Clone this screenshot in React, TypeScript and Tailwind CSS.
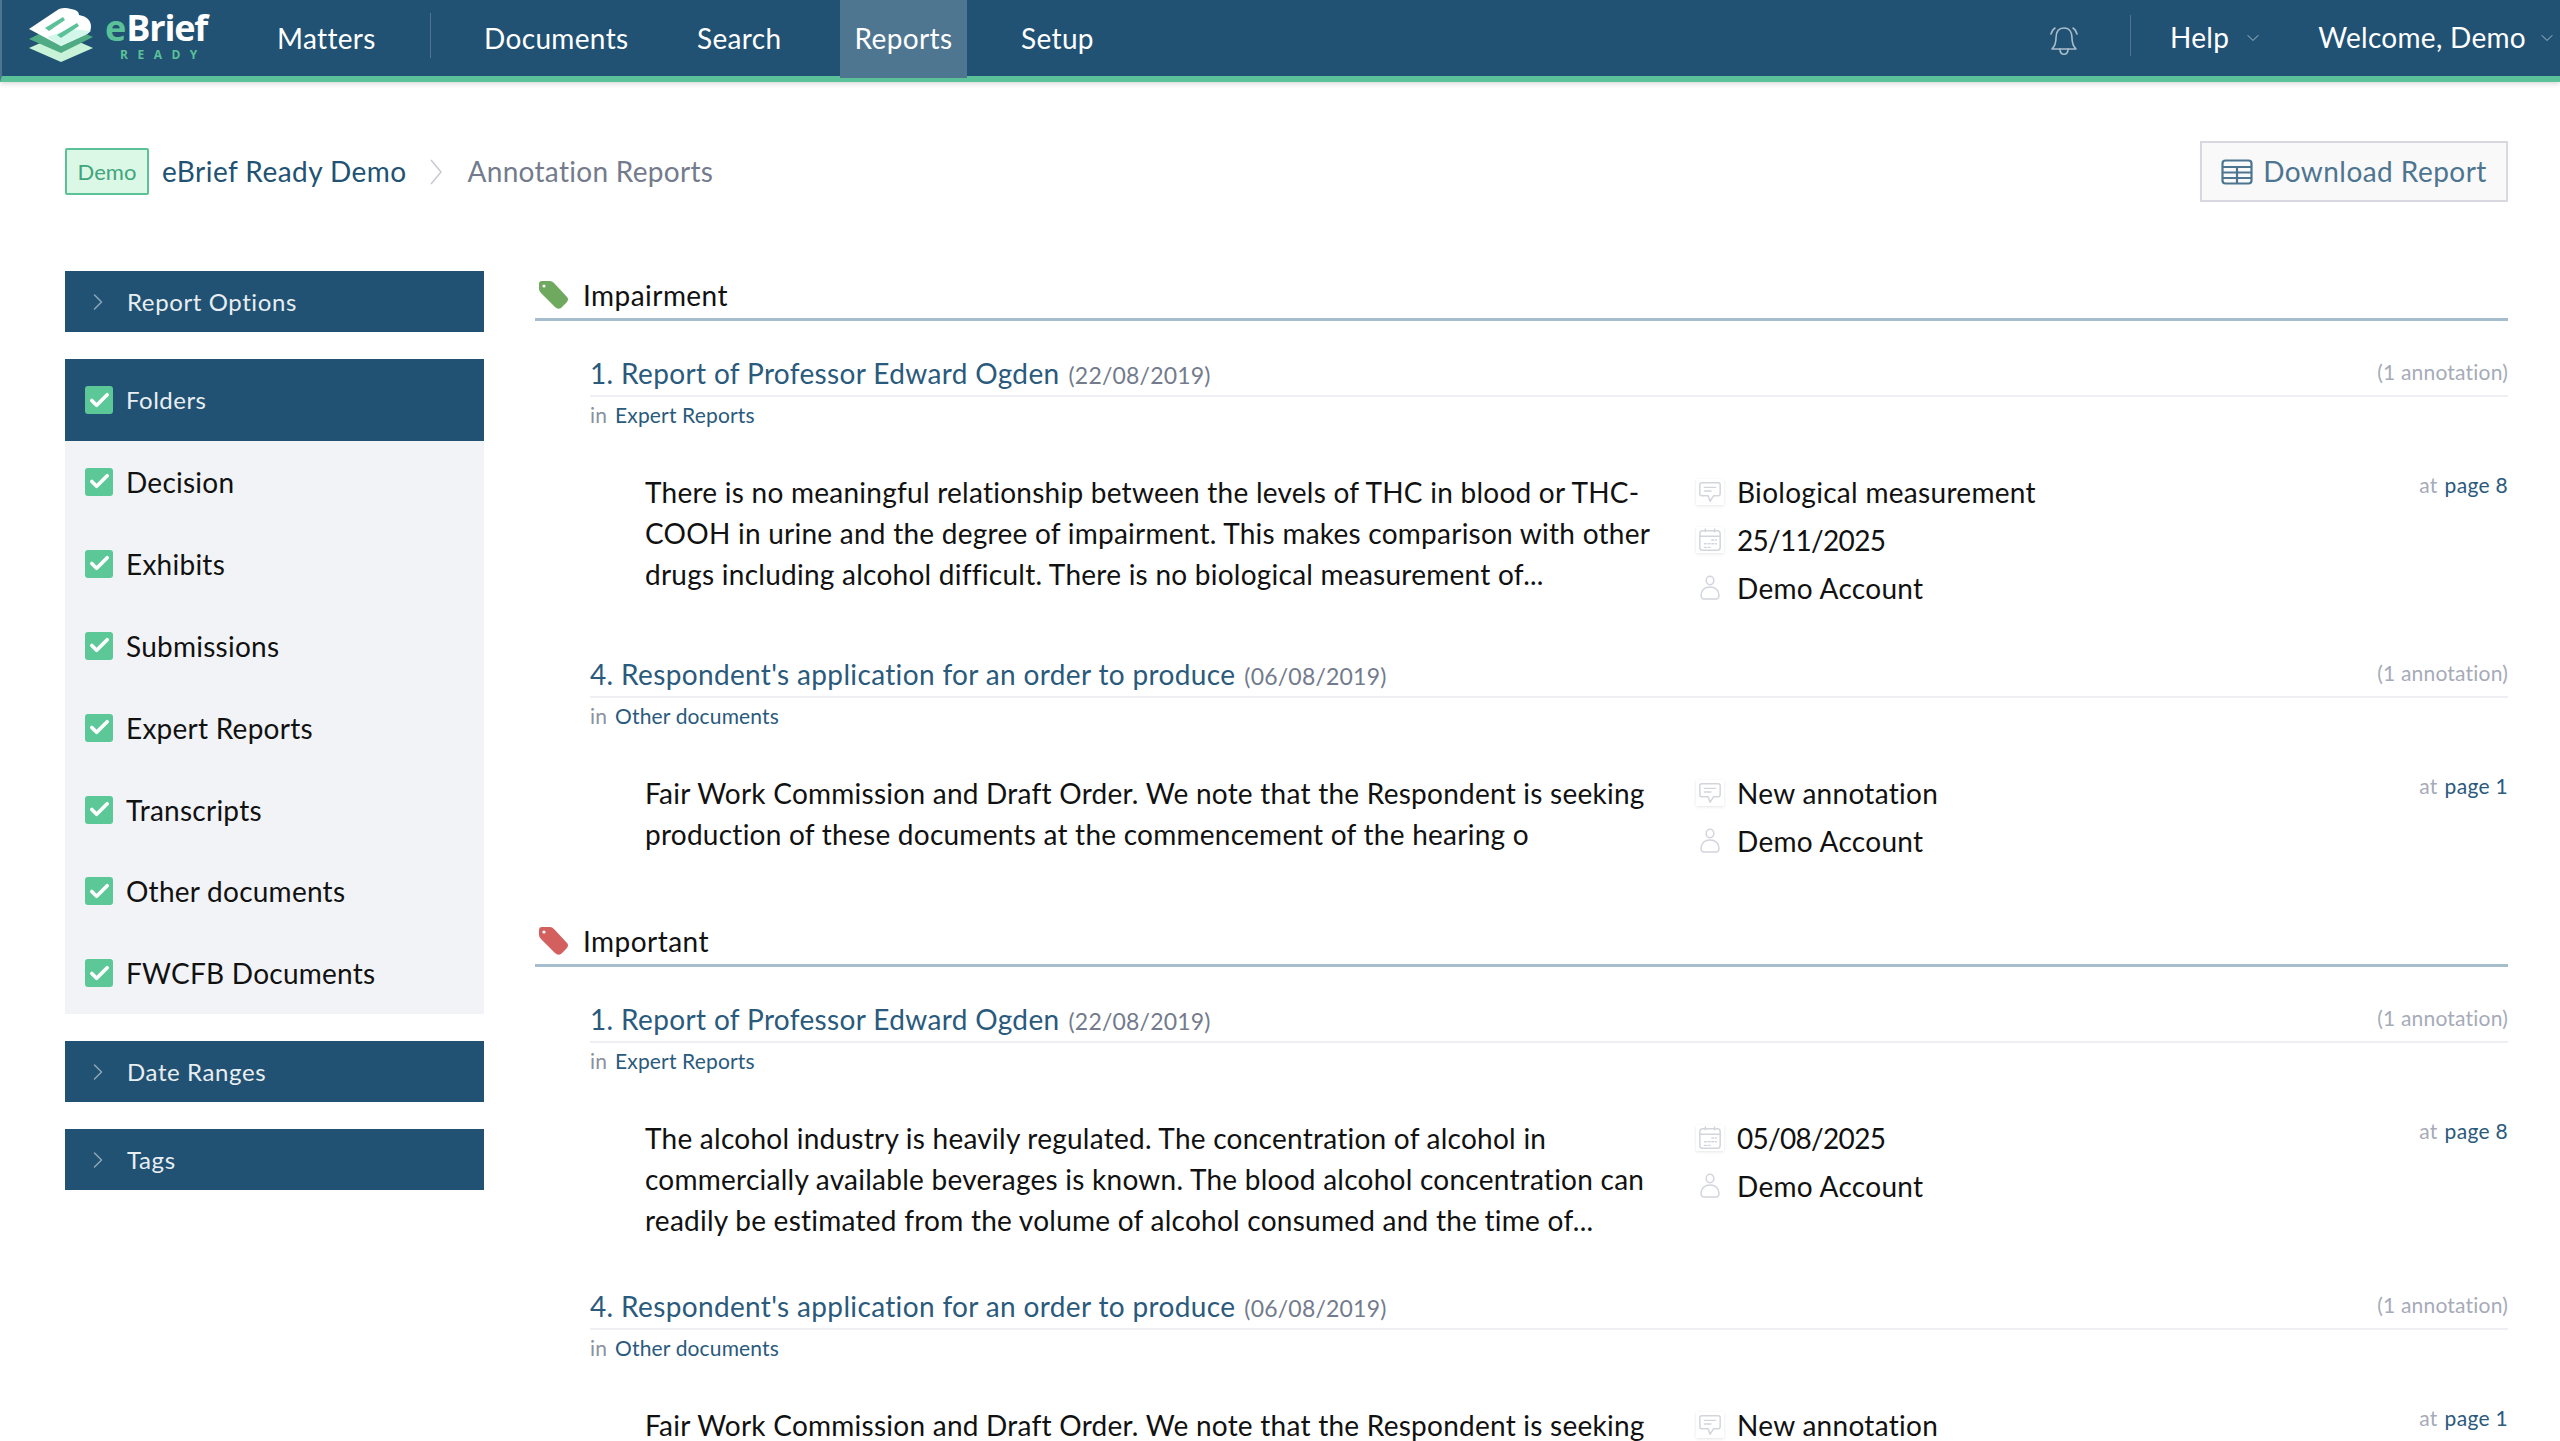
import React from "react";
import { ChevronRight, ChevronDown, Check } from "lucide-react";

function Logo() {
  return (
    <div className="flex items-center pl-[25px] w-[261px] h-[76px] shrink-0">
      <svg width="68" height="56" viewBox="0 0 68 56" className="shrink-0 mt-[-6px]">
        <path d="M34 28 L66 42 L34 56 L2 42 Z" fill="#c8f3d8" transform="translate(0,-1)" />
        <path d="M34 16 L66 30 L34 46 L2 32 Z" fill="#4fab83" />
        <path d="M2 22 L32 2 Q38 0 44 2 Q52 3 52 8 Q64 10 64 20 Q64 26 58 28 L34 39 Z" fill="#ffffff" />
        <path d="M34 39 L58 28 L64 24 L44 22 L20 30 Z" fill="#d3f7ea" />
        <path d="M18 21 L36 10 L38 13 L22 24 Z" fill="#5bc199" />
        <path d="M30 28 L50 16 L52 19 L34 31 Z" fill="#5bc199" />
      </svg>
      <div className="ml-[10px] flex flex-col items-start mt-[-6px]">
        <div className="text-[36px] leading-[36px] font-bold font-['Open_Sans',sans-serif]">
          <span className="text-[#5bc199]">e</span>
          <span className="text-white tracking-[-1.2px]">Brief</span>
        </div>
        <div className="text-[12px] leading-[12px] font-bold text-[#5bc199] tracking-[9.5px] ml-[15px] mt-[3px] font-['Open_Sans',sans-serif]">READY</div>
      </div>
    </div>
  );
}

function NavItem({ children, active = false, cls = "" }: { children: React.ReactNode; active?: boolean; cls?: string }) {
  return (
    <div className={`h-[78px] pb-[3px] flex items-center text-[28px] text-white tracking-[0.35px] px-[14px] relative z-10 whitespace-nowrap ${active ? "bg-[#4f7691] justify-center" : ""} ${cls}`}>
      {children}
    </div>
  );
}

function TopBar() {
  return (
    <div className="h-[82px] bg-[#215273] border-b-[6px] border-[#5bc199] border-l-2 border-l-[#4f7691] flex items-start shadow-[0_2px_5px_rgba(0,0,0,0.15)] shrink-0">
      <Logo />
      <NavItem cls="w-[125px]">Matters</NavItem>
      <div className="w-px h-[45px] bg-[#4f7691] mt-[13px] ml-[42px] mr-[39px]" />
      <NavItem cls="w-[172px]">Documents</NavItem>
      <NavItem cls="ml-[41px] w-[116px]">Search</NavItem>
      <NavItem cls="ml-[41px] w-[127px]" active>Reports</NavItem>
      <NavItem cls="ml-[40px]">Setup</NavItem>
      <div className="flex-1" />
      <svg width="34" height="32" viewBox="0 0 34 32" fill="none" stroke="#a9bdcb" strokeWidth="1.6" strokeLinecap="round" strokeLinejoin="round" className="mt-[25px] mr-[49px]">
        <path d="M17 3 C11 3 9 8 9 13 C9 19 7 22 5 24 L29 24 C27 22 25 19 25 13 C25 8 23 3 17 3 Z" />
        <path d="M13 24 C13 31 21 31 21 24" />
        <path d="M4 9 C5 6 6 4 8 3 M30 9 C29 6 28 4 26 3" />
      </svg>
      <div className="w-px h-[41px] bg-[#4f7691] mt-[15px] mr-[39px]" />
      <div className="h-[76px] pb-[3px] flex items-center text-[28px] text-white tracking-[0.3px]">Help</div>
      <ChevronDown size={20} strokeWidth={1.2} color="#a9bdcb" className="mt-[28px] ml-[14px] mr-[55px]" />
      <div className="h-[76px] pb-[3px] flex items-center text-[28px] text-white tracking-[0.3px] whitespace-nowrap">Welcome, Demo</div>
      <ChevronDown size={20} strokeWidth={1.2} color="#a9bdcb" className="mt-[28px] ml-[11px] mr-[3px] shrink-0" />
    </div>
  );
}

function Box() {
  return (
    <div className="w-[28px] h-[28px] rounded-[3px] bg-[#5cc898] flex items-center justify-center shrink-0">
      <Check size={23} color="#ffffff" strokeWidth={3.8} />
    </div>
  );
}

function Head({ label, cls = "" }: { label: string; cls?: string }) {
  return (
    <div className={`h-[61px] bg-[#215273] flex items-center text-[24px] text-[#e8eef2] tracking-[0.6px] ${cls}`}>
      <ChevronRight size={28} color="#8ba5b7" strokeWidth={1.3} className="ml-[19px] mr-[15px]" />
      {label}
    </div>
  );
}

function Sidebar() {
  const items = ["Decision", "Exhibits", "Submissions", "Expert Reports", "Transcripts", "Other documents", "FWCFB Documents"];
  return (
    <div className="w-[419px] shrink-0 pt-[189px]">
      <Head label="Report Options" />
      <div className="h-[82px] mt-[27px] bg-[#215273] flex items-center text-[24px] text-[#e8eef2] tracking-[0.5px] pl-[20px] gap-[13px]">
        <Box />
        Folders
      </div>
      <div className="bg-[#f2f3f6]">
        {items.map((t) => (
          <div key={t} className="h-[81.9px] flex items-center pl-[20px] gap-[13px] text-[28px] text-[#111111] tracking-[0.25px]">
            <Box />
            {t}
          </div>
        ))}
      </div>
      <Head label="Date Ranges" cls="mt-[27px]" />
      <Head label="Tags" cls="mt-[27px]" />
    </div>
  );
}

function TagIcon({ color }: { color: string }) {
  return (
    <svg width="32" height="30" viewBox="0 0 32 30" className="shrink-0">
      <path d="M2 4 Q2 1 5 1 L13 1 Q15 1 17 3 L30 17 Q32 19 30 22 L24 28 Q21 30 18 27 L4 13 Q2 11 2 9 Z" fill={color} />
      <circle cx="7" cy="6" r="1.6" fill="#ffffff" />
    </svg>
  );
}

function Section({ color, label, cls = "" }: { color: string; label: string; cls?: string }) {
  return (
    <div className={`h-[50px] border-b-[3px] border-[#a5bdcd] flex items-center pl-[2px] ${cls}`}>
      <TagIcon color={color} />
      <span className="ml-[14px] text-[28px] text-[#111111] tracking-[0.45px]">{label}</span>
    </div>
  );
}

function DocHead({ title, date, folder }: { title: string; date: string; folder: string }) {
  return (
    <div className="ml-[55px]">
      <div className="h-[43px] mt-[33px] border-b-2 border-[#eeeff2] flex items-start justify-between">
        <div className="whitespace-nowrap leading-[38px]">
          <span className="text-[28px] text-[#2a5a7c] tracking-[0.35px]">{title}</span>
          <span className="text-[23px] text-[#737b8c] ml-[9px] tracking-[0.2px]">{date}</span>
        </div>
        <span className="text-[21px] text-[#a6abb8] leading-[36px] tracking-[0.2px]">(1 annotation)</span>
      </div>
      <div className="h-[36px] flex items-center text-[21px] tracking-[0.15px]">
        <span className="text-[#8a91a1]">in</span>
        <span className="ml-[8px] text-[#2a5a7c]">{folder}</span>
      </div>
    </div>
  );
}

function IconBox({ children }: { children: React.ReactNode }) {
  return (
    <div className="w-[28px] h-[26px] flex items-center justify-center bg-white shadow-[0_1px_3px_rgba(0,0,0,0.1)]">
      {children}
    </div>
  );
}

function CommentIcon() {
  return (
    <IconBox>
      <svg width="24" height="24" viewBox="0 0 26 26" fill="none" stroke="#d3d5dd" strokeWidth="1.6" strokeLinejoin="round" strokeLinecap="round" className="shrink-0">
        <path d="M4 3 H22 Q24 3 24 5 V15 Q24 17 22 17 H17 L13 23 L11 17 H4 Q2 17 2 15 V5 Q2 3 4 3 Z" />
        <path d="M7 8 H19 M7 12 H14" />
      </svg>
    </IconBox>
  );
}
function CalIcon() {
  return (
    <IconBox>
      <svg width="24" height="24" viewBox="0 0 26 26" fill="none" stroke="#d3d5dd" strokeWidth="1.6" strokeLinecap="round" className="shrink-0">
        <rect x="2" y="3" width="22" height="21" rx="3" />
        <path d="M2 9 H24 M8 1 V4 M18 1 V4" />
        <path d="M15 13 H20 M7 17 H20 M7 21 H15" strokeDasharray="2 2" />
      </svg>
    </IconBox>
  );
}
function UserIcon() {
  return (
    <div className="w-[28px] flex justify-center">
      <svg width="26" height="26" viewBox="0 0 26 26" fill="none" stroke="#d3d5dd" strokeWidth="1.5" className="shrink-0">
        <ellipse cx="13" cy="5.5" rx="3.8" ry="4.2" />
        <path d="M7 24 Q4 24 4 20 Q5 12 13 12 Q21 12 22 20 Q22 24 19 24 Z" />
      </svg>
    </div>
  );
}

function Meta({ icon, text, date }: { icon: React.ReactNode; text: string; date?: boolean }) {
  return (
    <div className={`h-[48px] flex items-center text-[28px] text-[#111111] whitespace-nowrap ${date ? "tracking-[-0.7px]" : "tracking-[0.3px]"}`}>
      <div className="w-[41px] flex items-center">{icon}</div>
      {text}
    </div>
  );
}

function Annotation({ lines, meta, page, pb }: { lines: string[]; meta: [React.ReactNode, string][]; page: string; pb: string }) {
  return (
    <div className={`ml-[110px] flex items-start pt-[39px] ${pb}`}>
      <div className="w-[1052px] shrink-0 text-[28px] leading-[41px] text-[#111111] tracking-[0.25px]">
        {lines.map((l) => (
          <div key={l} className="whitespace-nowrap">{l}</div>
        ))}
      </div>
      <div className="mt-[-4px] ml-[-1px] flex-1">
        {meta.map(([icon, text]) => (
          <Meta key={text} icon={icon} text={text} date={/^\d/.test(text)} />
        ))}
      </div>
      <div className="text-[21px] leading-[26px] tracking-[0.3px] whitespace-nowrap">
        <span className="text-[#a6abb8]">at</span>
        <span className="ml-[7px] text-[#2a5a7c]">page {page}</span>
      </div>
    </div>
  );
}

const t1 = "1. Report of Professor Edward Ogden";
const t4 = "4. Respondent's application for an order to produce";
const d1 = "(22/08/2019)";
const d4 = "(06/08/2019)";
const fw = [
  "Fair Work Commission and Draft Order. We note that the Respondent is seeking",
  "production of these documents at the commencement of the hearing o",
];

function Main() {
  return (
    <div className="flex-1 min-w-0 pt-[189px] ml-[51px]">
      <Section color="#6ea95f" label="Impairment" />
      <DocHead title={t1} date={d1} folder="Expert Reports" />
      <Annotation
        pb="pb-[10px]"
        page="8"
        lines={[
          "There is no meaningful relationship between the levels of THC in blood or THC-",
          "COOH in urine and the degree of impairment. This makes comparison with other",
          "drugs including alcohol difficult. There is no biological measurement of...",
        ]}
        meta={[
          [<CommentIcon />, "Biological measurement"],
          [<CalIcon />, "25/11/2025"],
          [<UserIcon />, "Demo Account"],
        ]}
      />
      <DocHead title={t4} date={d4} folder="Other documents" />
      <Annotation
        pb="pb-[52px]"
        page="1"
        lines={fw}
        meta={[
          [<CommentIcon />, "New annotation"],
          [<UserIcon />, "Demo Account"],
        ]}
      />
      <Section color="#d35f5f" label="Important" />
      <DocHead title={t1} date={d1} folder="Expert Reports" />
      <Annotation
        pb="pb-[13px]"
        page="8"
        lines={[
          "The alcohol industry is heavily regulated. The concentration of alcohol in",
          "commercially available beverages is known. The blood alcohol concentration can",
          "readily be estimated from the volume of alcohol consumed and the time of...",
        ]}
        meta={[
          [<CalIcon />, "05/08/2025"],
          [<UserIcon />, "Demo Account"],
        ]}
      />
      <DocHead title={t4} date={d4} folder="Other documents" />
      <Annotation
        pb="pb-[50px]"
        page="1"
        lines={fw}
        meta={[
          [<CommentIcon />, "New annotation"],
          [<UserIcon />, "Demo Account"],
        ]}
      />
    </div>
  );
}

function Breadcrumb() {
  return (
    <div className="absolute left-[65px] right-[52px] top-[141px] h-[61px] flex items-center">
      <div className="w-[84px] h-[47px] bg-[#dbf7e6] border-2 border-[#5bc199] rounded-[2px] flex items-center justify-center text-[22px] text-[#3fa57c]">Demo</div>
      <span className="ml-[13px] mt-[-2px] text-[28px] text-[#215273] tracking-[0.45px]">eBrief Ready Demo</span>
      <svg width="14" height="26" viewBox="0 0 14 26" fill="none" stroke="#c8cad0" strokeWidth="1.5" className="ml-[22px]">
        <path d="M2 1 L12 13 L2 25" />
      </svg>
      <span className="ml-[25px] mt-[-2px] text-[28px] text-[#737b8c] tracking-[0.3px]">Annotation Reports</span>
      <div className="flex-1" />
      <div className="w-[308px] h-[61px] border-2 border-[#d8d9e0] bg-[#f9f9fa] flex items-center justify-center gap-[10px] text-[28px] text-[#4d7590] tracking-[0.45px]">
        <svg width="32" height="26" viewBox="0 0 32 26" fill="none" stroke="#4d7590" strokeWidth="2.2">
          <rect x="1.5" y="1.5" width="29" height="23" rx="3" />
          <path d="M1.5 8 H30.5 M1.5 13.5 H30.5 M1.5 19 H30.5 M16 8 V24.5" />
        </svg>
        <span className="mt-[-2px]">Download Report</span>
      </div>
    </div>
  );
}

export default function App() {
  return (
    <div className="relative h-[1441px] overflow-hidden bg-white font-['Lato',sans-serif]">
      <TopBar />
      <Breadcrumb />
      <div className="flex pl-[65px] pr-[52px]">
        <Sidebar />
        <Main />
      </div>
    </div>
  );
}
